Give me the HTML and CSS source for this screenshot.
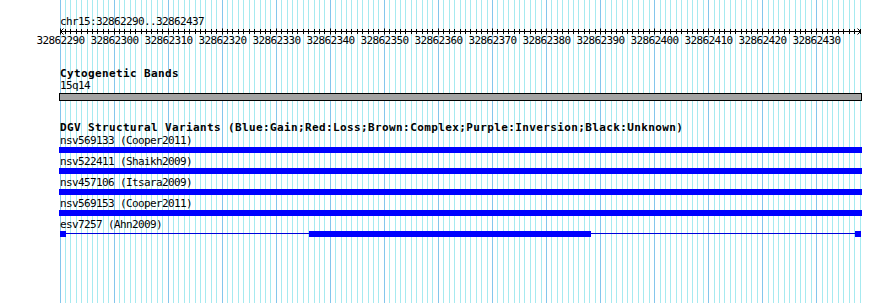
FILE: index.html
```html
<!DOCTYPE html>
<html>
<head>
<meta charset="utf-8">
<title>chr15:32862290..32862437</title>
<link rel="stylesheet" href="styles.css">
</head>
<body>
<div class="page">
  <svg class="grid" id="grid" width="890" height="303" xmlns="http://www.w3.org/2000/svg"></svg>
  <div class="content">
    <div class="locus">chr15:32862290..32862437</div>
    <svg class="ruler" id="ruler" width="890" height="20" xmlns="http://www.w3.org/2000/svg"></svg>

    <section class="track cyto">
      <div class="track-title">Cytogenetic Bands</div>
      <div class="feat-label">15q14</div>
      <div class="band"></div>
    </section>

    <section class="track dgv">
      <div class="track-title">DGV Structural Variants (Blue:Gain;Red:Loss;Brown:Complex;Purple:Inversion;Black:Unknown)</div>
      <div class="feat">
        <div class="feat-label">nsv569133 (Cooper2011)</div>
        <div class="bar"></div>
      </div>
      <div class="feat">
        <div class="feat-label">nsv522411 (Shaikh2009)</div>
        <div class="bar"></div>
      </div>
      <div class="feat">
        <div class="feat-label">nsv457106 (Itsara2009)</div>
        <div class="bar"></div>
      </div>
      <div class="feat">
        <div class="feat-label">nsv569153 (Cooper2011)</div>
        <div class="bar"></div>
      </div>
      <div class="feat">
        <div class="feat-label">esv7257 (Ahn2009)</div>
        <div class="gapped">
          <div class="blk blk-s"></div>
          <div class="link link-a"></div>
          <div class="blk blk-m"></div>
          <div class="link link-b"></div>
          <div class="blk blk-s"></div>
        </div>
      </div>
    </section>
  </div>
</div>
<script src="script.js"></script>
</body>
</html>
```

FILE: styles.css
```css
html, body {
  margin: 0;
  padding: 0;
  background: #ffffff;
}

.page {
  position: relative;
  width: 890px;
  height: 303px;
  overflow: hidden;
  font-family: "DejaVu Sans Mono", "Liberation Mono", monospace;
  font-size: 11px;
  color: #000;
}

.grid {
  position: absolute;
  left: 0;
  top: 0;
  z-index: 0;
}

.grid .minor { stroke: #a6eaf0; stroke-width: 1; }
.grid .major { stroke: #84c6ec; stroke-width: 1; }

.content {
  position: relative;
  z-index: 1;
  padding: 15px 0 0 60px;
  display: flex;
  flex-direction: column;
}

.locus {
  line-height: 13px;
  height: 13px;
  letter-spacing: -0.62px;
  white-space: nowrap;
}

.ruler {
  display: block;
  margin-left: -60px;
}

.ruler .axis, .ruler .tick { stroke: #000; stroke-width: 1; fill: none; }
.ruler text {
  font-family: "DejaVu Sans Mono", "Liberation Mono", monospace;
  font-size: 11px;
  letter-spacing: -0.62px;
  fill: #000;
}

.track {
  display: flex;
  flex-direction: column;
}

.track-title {
  font-weight: bold;
  line-height: 12px;
  height: 12px;
  letter-spacing: 0.38px;
  white-space: nowrap;
}

.feat-label {
  line-height: 12px;
  height: 12px;
  letter-spacing: -0.62px;
  white-space: nowrap;
}

.cyto { margin-top: 20px; }

.band {
  margin: 1px 0 0 -1px;
  width: 803px;
  height: 8px;
  box-sizing: border-box;
  border: 1px solid #000;
  background: #a3a3a3;
}

.dgv { margin-top: 21px; }
.dgv .track-title { margin-bottom: 1px; }

.feat {
  display: flex;
  flex-direction: column;
  margin-bottom: 3px;
}

.bar {
  margin-left: -1px;
  width: 803px;
  height: 6px;
  background: #0000ff;
}

.gapped {
  display: flex;
  align-items: flex-start;
  height: 6px;
}

.blk {
  height: 6px;
  background: #0000ff;
}
.blk-s { width: 6px; }
.blk-m { width: 282px; }

.link {
  height: 1px;
  margin-top: 2px;
  background: #0000dc;
}
.link-a { width: 243px; }
.link-b { width: 264px; }
```

FILE: script.js
```js
(function () {
  var NS = "http://www.w3.org/2000/svg";
  var start = 32862290, end = 32862437;
  var x0 = 60, x1 = 860;
  var bases = end - start + 1; // 148
  var step = (x1 - x0) / bases;

  function el(name, attrs, parent) {
    var e = document.createElementNS(NS, name);
    for (var k in attrs) e.setAttribute(k, attrs[k]);
    parent.appendChild(e);
    return e;
  }

  var grid = document.getElementById("grid");
  var ruler = document.getElementById("ruler");

  for (var i = 0; i <= bases; i++) {
    var x = Math.floor(x0 + i * step) + 0.5;
    var major = (i % 10 === 0);
    el("line", { x1: x, y1: 0, x2: x, y2: 303, "class": major ? "major" : "minor" }, grid);
    el("line", { x1: x, y1: major ? 0.5 : 1, x2: x, y2: major ? 6.5 : 6, "class": "tick" }, ruler);
    if (major && i <= 140) {
      var t = el("text", { x: x, y: 16, "text-anchor": "middle" }, ruler);
      t.textContent = String(start + i);
    }
  }

  // axis with arrowheads
  el("line", { x1: x0, y1: 3.5, x2: x1 + 1, y2: 3.5, "class": "axis" }, ruler);
  el("polyline", { points: (x0 + 3.5) + ",0.5 " + (x0 + 0.5) + ",3.5 " + (x0 + 3.5) + ",6.5", "class": "axis" }, ruler);
  el("polyline", { points: (x1 - 2.5) + ",0.5 " + (x1 + 0.5) + ",3.5 " + (x1 - 2.5) + ",6.5", "class": "axis" }, ruler);
})();
```
